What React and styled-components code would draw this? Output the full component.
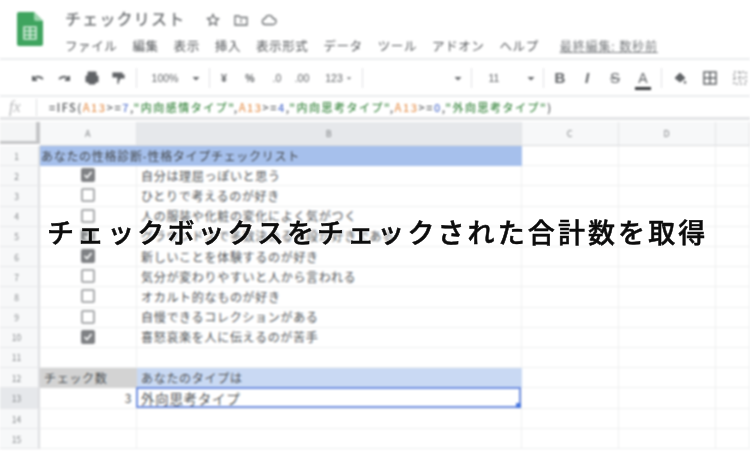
import React from "react";
import styled, { createGlobalStyle } from "styled-components";

const Global = createGlobalStyle`
  html, body { margin: 0; padding: 0; background: #fff; }
  body { font-family: "Noto Sans CJK JP", "Liberation Sans", sans-serif; }
`;
const Scene = styled.div`
  position: relative; width: 750px; height: 453px; overflow: hidden; background: #fff;
`;
const Blurred = styled.div`
  display: flex; flex-direction: column; width: 750px; height: 453px; filter: blur(1.1px); color: #3c4043;
`;
const Header = styled.header`
  display: flex; height: 60px; box-sizing: border-box; padding: 12px 0 0 17px; gap: 22px; border-bottom: 2px solid #ebecee;
`;
const HeaderText = styled.div`
  display: flex; flex-direction: column; margin-top: -5px;
`;
const TitleRow = styled.div`
  display: flex; align-items: center; height: 22px; gap: 12px;
`;
const DocName = styled.div`
  font-size: 16px; color: #6a6d70; letter-spacing: 1.2px; width: 128px; white-space: nowrap; font-weight: 500;
`;
const TitleIcon = styled.span`
  display: inline-flex; margin-top: 4px; color: #6a6d70;
`;
const MenuRow = styled.nav`
  display: flex; align-items: center; height: 27px; margin-top: 4px; gap: 15px; font-size: 12.5px; font-weight: 400; color: #56595c;
`;
const MenuItem = styled.span`
  white-space: nowrap; letter-spacing: .6px;
`;
const LastEdit = styled.span`
  margin-left: 6px; font-size: 12px; color: #797c7f; text-decoration: underline; letter-spacing: .9px; white-space: nowrap;
`;
const Toolbar = styled.div`
  display: flex; align-items: center; height: 37px; box-sizing: border-box; padding-left: 28px; border-bottom: 2px solid #ebecee; color: #606366;
`;
const Tool = styled.span`
  display: inline-flex; flex: none; position: relative; align-items: center; justify-content: center; width: ${p => p.$w}px; height: 20px; margin-left: ${p => p.$ml || 0}px; font-size: ${p => p.$size || 10.5}px; white-space: nowrap; font-family: "Liberation Sans", sans-serif; font-weight: ${p => p.$bold ? 700 : 400}; font-style: ${p => p.$italic ? "italic" : "normal"};
`;
const ColorBar = styled.span`
  position: absolute; left: 3px; right: 3px; bottom: -2px; height: 3px; background: #35373a;
`;
const Sep = styled.span`
  flex: none; width: 1px; height: 20px; background: #e1e2e4; margin-left: ${p => p.$l || 0}px; margin-right: ${p => p.$r || 0}px;
`;
const FormulaBar = styled.div`
  display: flex; align-items: center; height: 23px; box-sizing: border-box; border-bottom: 3px solid #e3e4e6;
`;
const Fx = styled.span`
  width: 37px; padding-left: 9px; box-sizing: border-box; font: italic 16px "Liberation Serif", serif; color: #b5b6b8; border-right: 1px solid #dedfe1; height: 17px; line-height: 15px;
`;
const Formula = styled.div`
  margin-left: 12px; font-size: 11px; letter-spacing: 1.5px; font-weight: 500; color: #4d5053; white-space: nowrap;
`;
const Tok = styled.span`
  color: ${p => p.$c};
`;
const Sheet = styled.div`
  display: grid; grid-template-columns: 40px 97px 385px 97px 97px 34px; grid-template-rows: 24px repeat(12, 20.2px) 21px 20px 20px; flex: 1; margin-top: 2px; font-size: 12px; letter-spacing: .7px;
`;
const Corner = styled.div`
  background: #f4f5f6; border-right: 4px solid #c4c5c7; border-bottom: 3px solid #c4c5c7; box-sizing: border-box; height: 22px;
`;
const ColHead = styled.div`
  box-sizing: border-box; display: flex; align-items: center; justify-content: center; font-size: 9px; color: #808386;
  background: ${p => p.$on ? "#e6e8eb" : "#f7f8f9"};
  border-right: 1px solid #e2e3e5; border-bottom: 1px solid #d8d9db;
`;
const RowHead = styled.div`
  display: flex; align-items: center; justify-content: center; font-size: 8.5px; color: #85888b; box-sizing: border-box; letter-spacing: 0; padding-right: 5px;
  background: ${p => p.$on ? "#e6e8eb" : "#f7f8f9"};
  border-right: 2px solid #dcdde0; border-bottom: 1px solid #e6e7e9;
`;
const Cell = styled.div`
  position: relative; display: flex; align-items: center; box-sizing: border-box; white-space: nowrap; padding: 0 4px 1px; min-width: 0;
  justify-content: ${p => p.$align || "flex-start"};
  background: ${p => p.$bg || "#fff"};
  color: ${p => p.$c || "#505356"};
  font-size: ${p => p.$size || 12}px;
  font-weight: 400;
  border-right: 1px solid ${p => p.$bg || "#eeeff0"}; border-bottom: 1px solid ${p => p.$bg || "#eeeff0"};
`;
const SpillCell = styled(Cell)`
  z-index: 1; padding-left: 1px; overflow: visible;
`;
const Selection = styled.div`
  position: absolute; inset: -1px 0 0 -1px; border: 2px solid #6f8fe0; pointer-events: none;
`;
const Handle = styled.div`
  position: absolute; right: -2px; bottom: -2px; width: 5px; height: 5px; background: #4a78e0;
`;
const Box = styled.span`
  display: flex; align-items: center; justify-content: center; width: 14px; height: 14px; border-radius: 2px; box-sizing: border-box;
  border: 2px solid ${p => p.$on ? "#7f8184" : "#a9abad"};
  background: ${p => p.$on ? "#7f8184" : "#fff"};
`;
const Headline = styled.div`
  position: absolute; left: 47px; top: 213px; font-family: "Noto Sans CJK JP", sans-serif; font-size: 27px; font-weight: 500; line-height: 38px; letter-spacing: 3.1px; color: #0c0c0c; white-space: nowrap;
  -webkit-text-stroke: 0.5px #0c0c0c;
  text-shadow: 0 0 3px #fff, 0 0 4px #fff;
`;

const I = ({ w = 16, children, sw = 1.5 }) => (
  <svg width={w} height="16" viewBox="0 0 16 16" fill="none" stroke="currentColor" strokeWidth={sw}>{children}</svg>
);
const Logo = () => (
  <svg width="26" height="34" viewBox="0 0 26 34">
    <path d="M2 0H17L26 9V32a2 2 0 0 1-2 2H2a2 2 0 0 1-2-2V2a2 2 0 0 1 2-2z" fill="#3fa45f" />
    <path d="M17 0L26 9H19a2 2 0 0 1-2-2z" fill="#9cd4ad" />
    <path d="M7 15H19V27H7zM7 19H19M7 23H19M13 15V27" fill="none" stroke="#d9efe0" strokeWidth="1.6" />
  </svg>
);
const Caret = () => (
  <I><path d="M4.5 7h7L8 10.5z" fill="currentColor" stroke="none" /></I>
);

const checks = { 2: 1, 3: 0, 4: 0, 5: 1, 6: 1, 7: 0, 8: 0, 9: 0, 10: 1 };
const labels = {
  2: "自分は理屈っぽいと思う",
  3: "ひとりで考えるのが好き",
  4: "人の服装や化粧の変化によく気がつく",
  5: "グラウンドスで多数決める手段が好きである",
  6: "新しいことを体験するのが好き",
  7: "気分が変わりやすいと人から言われる",
  8: "オカルト的なものが好き",
  9: "自慢できるコレクションがある",
  10: "喜怒哀楽を人に伝えるのが苦手",
};
const menu = ["ファイル", "編集", "表示", "挿入", "表示形式", "データ", "ツール", "アドオン", "ヘルプ"];
const Empties = () => (<><Cell /><Cell /><Cell /></>);

export default function App() {
  const rows = [];
  for (let r = 2; r <= 10; r++) {
    rows.push(
      <React.Fragment key={r}>
        <RowHead>{r}</RowHead>
        <Cell $align="center">
          <Box $on={checks[r]}>
            {checks[r] ? <svg width="10" height="10" viewBox="0 0 10 10"><path d="M1.5 5L4 7.5L8.5 2" fill="none" stroke="#fff" strokeWidth="1.7" /></svg> : null}
          </Box>
        </Cell>
        <Cell>{labels[r]}</Cell>
        <Empties />
      </React.Fragment>
    );
  }
  return (
    <Scene>
      <Global />
      <Blurred>
        <Header>
          <Logo />
          <HeaderText>
            <TitleRow>
              <DocName>チェックリスト</DocName>
              <TitleIcon><I sw={1.3}><path d="M8 2.5l1.7 3.6 3.8.5-2.8 2.6.7 3.8L8 11l-3.4 1.9.7-3.8-2.8-2.6 3.8-.5z" /></I></TitleIcon>
              <TitleIcon><I sw={1.3}><path d="M2 4h4l1.5 1.5H14v7.5H2z" /><path d="M8 7.5v3" /></I></TitleIcon>
              <TitleIcon><I sw={1.3}><path d="M4.5 12.5a3 3 0 0 1-.3-6A4 4 0 0 1 12 6.5a3 3 0 0 1 0 6z" /></I></TitleIcon>
            </TitleRow>
            <MenuRow>
              {menu.map(m => <MenuItem key={m}>{m}</MenuItem>)}
              <LastEdit>最終編集: 数秒前</LastEdit>
            </MenuRow>
          </HeaderText>
        </Header>
        <Toolbar>
          <Tool $w={20}><I sw={2}><path d="M3 10c2-4 6-4 10-1M3 6v4h4" /></I></Tool>
          <Tool $w={32}><I sw={2}><path d="M13 10c-2-4-6-4-10-1M13 6v4H9" /></I></Tool>
          <Tool $w={24}><I sw={1}><path d="M4 6V2h8v4M2 6h12v6H2zM5 10h6v4H5z" fill="currentColor" /></I></Tool>
          <Tool $w={28}><I sw={1.2}><path d="M3 3h9v4H3zM12 5h2v3H8v6" fill="currentColor" /></I></Tool>
          <Sep $l={4} $r={10} />
          <Tool $w={36}>100%</Tool>
          <Tool $w={26}><Caret /></Tool>
          <Sep />
          <Tool $w={28} $bold>¥</Tool>
          <Tool $w={24} $bold>%</Tool>
          <Tool $w={30}>.0</Tool>
          <Tool $w={20}>.00</Tool>
          <Tool $w={20} $ml={12}>123</Tool>
          <Tool $w={10}><Caret /></Tool>
          <Sep $l={8} />
          <Tool $w={83} />
          <Tool $w={24}><Caret /></Tool>
          <Sep $l={1} />
          <Tool $w={44}>11</Tool>
          <Tool $w={24} $ml={3}><Caret /></Tool>
          <Sep />
          <Tool $w={32} $size={15} $bold>B</Tool>
          <Tool $w={22} $size={15} $italic $bold>I</Tool>
          <Tool $w={34} $size={15}><s>S</s></Tool>
          <Tool $w={22} $size={14}>A<ColorBar /></Tool>
          <Sep $l={7} />
          <Tool $w={36}><I sw={1}><path d="M3 8l5-5 5 5-5 4zM13 11l1 2h-2z" fill="currentColor" /></I></Tool>
          <Tool $w={24}><I><path d="M2 2h12v12H2zM2 8h12M8 2v12" /></I></Tool>
          <Tool $w={36}><I sw={1}><path d="M2 2h12v12H2zM2 8h12M8 2v12" strokeDasharray="2 2" /></I></Tool>
        </Toolbar>
        <FormulaBar>
          <Fx>fx</Fx>
          <Formula>
            =IFS(<Tok $c="#e8995a">A13</Tok>&gt;=<Tok $c="#5a78d0">7</Tok>,<Tok $c="#3f8a45">"内向感情タイプ"</Tok>,<Tok $c="#e8995a">A13</Tok>&gt;=<Tok $c="#5a78d0">4</Tok>,<Tok $c="#3f8a45">"内向思考タイプ"</Tok>,<Tok $c="#e8995a">A13</Tok>&gt;=<Tok $c="#5a78d0">0</Tok>,<Tok $c="#3f8a45">"外向思考タイプ"</Tok>)
          </Formula>
        </FormulaBar>
        <Sheet>
          <Corner />
          <ColHead>A</ColHead>
          <ColHead $on>B</ColHead>
          <ColHead>C</ColHead>
          <ColHead>D</ColHead>
          <ColHead />

          <RowHead>1</RowHead>
          <SpillCell $bg="#a6c0ec" $c="#45484b">あなたの性格診断-性格タイプチェックリスト</SpillCell>
          <Cell $bg="#a6c0ec" />
          <Empties />

          {rows}

          <RowHead>11</RowHead>
          <Cell /><Cell /><Empties />

          <RowHead>12</RowHead>
          <Cell $bg="#d3d3d3">チェック数</Cell>
          <Cell $bg="#c9d9f3">あなたのタイプは</Cell>
          <Empties />

          <RowHead $on>13</RowHead>
          <Cell $align="flex-end">3</Cell>
          <Cell $size={13.5}>外向思考タイプ<Selection><Handle /></Selection></Cell>
          <Empties />

          <RowHead>14</RowHead>
          <Cell /><Cell /><Empties />

          <RowHead>15</RowHead>
          <Cell /><Cell /><Empties />
        </Sheet>
      </Blurred>
      <Headline>チェックボックスをチェックされた合計数を取得</Headline>
    </Scene>
  );
}
